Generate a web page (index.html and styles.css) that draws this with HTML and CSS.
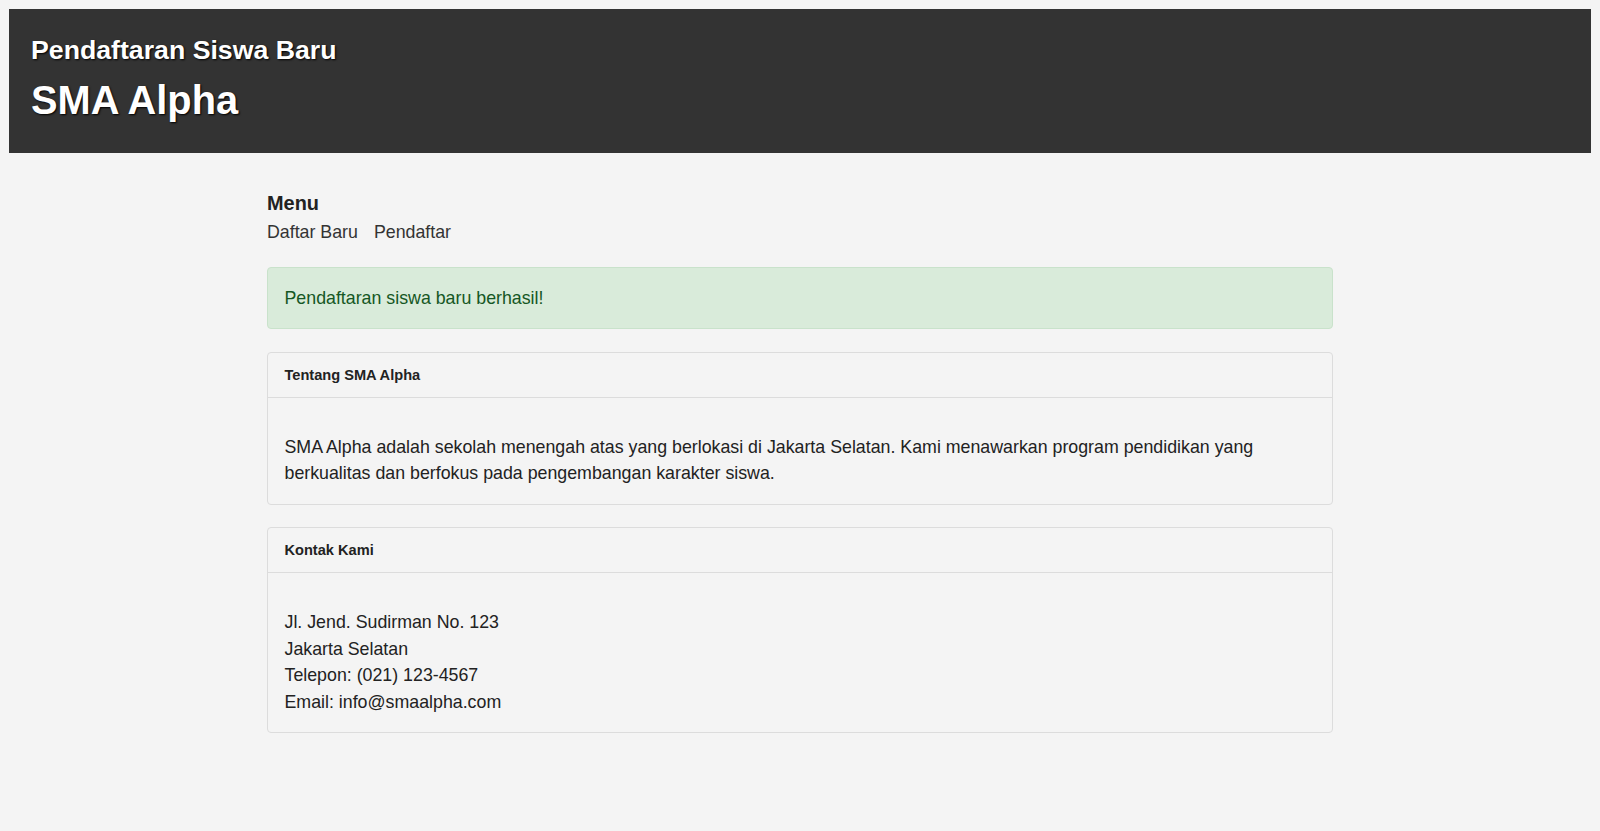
FILE: index.html
```html
<!DOCTYPE html>
<html lang="id">
<head>
    <meta charset="UTF-8">
    <meta name="viewport" content="width=device-width, initial-scale=1.0">
    <title>Pendaftaran Siswa Baru - SMA Alpha</title>
    <link rel="stylesheet" href="styles.css">
</head>
<body>

    <!-- Header -->
    <header class="site-header">
        <h1>Pendaftaran Siswa Baru</h1>
        <h2>SMA Alpha</h2>
    </header>

    <div class="container">
        <!-- Menu -->
        <nav class="menu">
            <h3>Menu</h3>
            <div class="menu-links">
                <a href="#">Daftar Baru</a>
                <a href="#">Pendaftar</a>
            </div>
        </nav>

        <div class="alert alert-success">Pendaftaran siswa baru berhasil!</div>

        <div class="card">
            <div class="card-header">Tentang SMA Alpha</div>
            <div class="card-body">
                <p>SMA Alpha adalah sekolah menengah atas yang berlokasi di Jakarta Selatan. Kami menawarkan program pendidikan yang berkualitas dan berfokus pada pengembangan karakter siswa.</p>
            </div>
        </div>

        <div class="card">
            <div class="card-header">Kontak Kami</div>
            <div class="card-body">
                <p>Jl. Jend. Sudirman No. 123<br>
                Jakarta Selatan<br>
                Telepon: (021) 123-4567<br>
                Email: info@smaalpha.com</p>
            </div>
        </div>
    </div>

</body>
</html>
```

FILE: styles.css
```css
body {
    font-family: "Liberation Sans", Arial, sans-serif;
    background-color: #f4f4f4;
    color: #222;
    margin: 9px;
    font-size: 17.8px;
}

/* Header */
.site-header {
    background-color: #333;
    color: #fff;
    padding: 26px 22px 30px;
}

.site-header h1 {
    font-size: 26.7px;
    margin: 0 0 12px;
    text-shadow: 1px 1px 2px #000;
}

.site-header h2 {
    font-size: 39.8px;
    margin: 0;
    text-shadow: 1px 1px 2px #000;
}

/* Content */
.container {
    max-width: 1066px;
    margin: 39px auto 0;
}

.menu h3 {
    font-size: 19.9px;
    margin: 0 0 7px;
    color: #222;
}

.menu-links {
    display: flex;
    gap: 16px;
}

.menu-links a {
    color: #333;
    text-decoration: none;
}

.alert {
    margin-top: 23.5px;
    padding: 17.5px 16.5px 16.5px;
    border-radius: 4px;
    line-height: 1.5;
}

.alert-success {
    background-color: #d9ebda;
    border: 1px solid #c9e2cb;
    color: #155724;
}

.card {
    margin-top: 22.5px;
    border: 1px solid #dcdcdc;
    border-radius: 4px;
}

.card-header {
    font-size: 14.6px;
    font-weight: bold;
    padding: 14px 16.5px;
    border-bottom: 1px solid #dcdcdc;
}

.card-body {
    padding: 16.5px;
    line-height: 1.5;
}

.card-body p {
    margin: 19.5px 0 0;
}
```
